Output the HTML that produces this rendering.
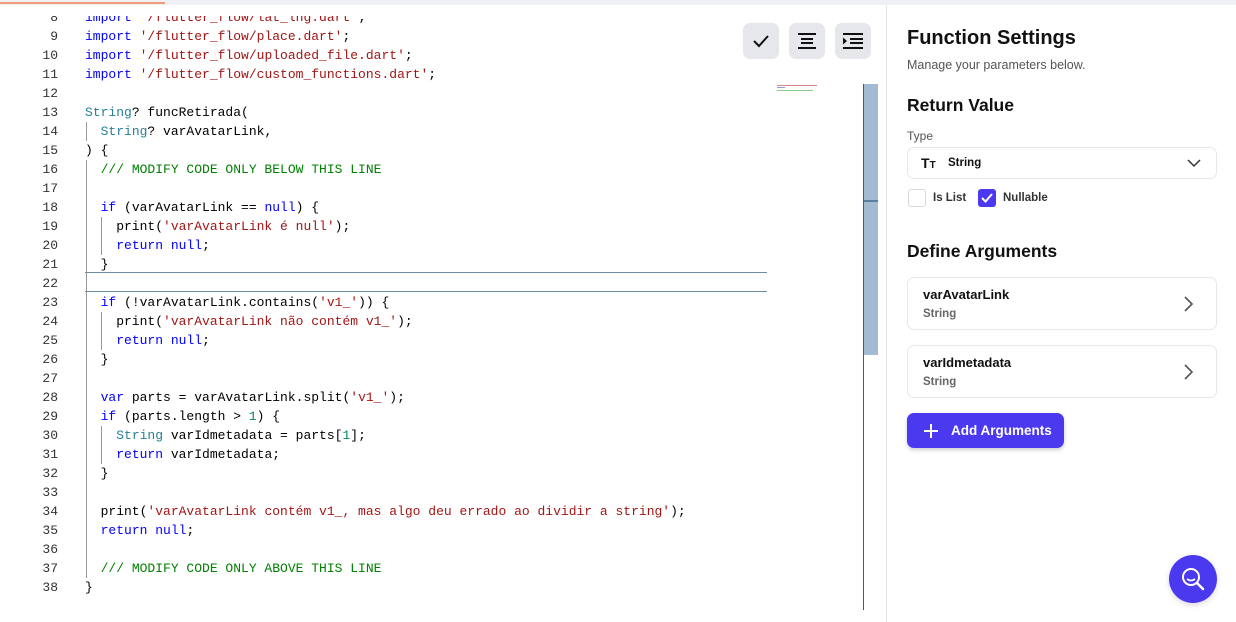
<!DOCTYPE html>
<html><head><meta charset="utf-8"><style>
*{margin:0;padding:0;box-sizing:border-box}
body{width:1236px;height:622px;overflow:hidden;background:#fff;position:relative;font-family:"Liberation Sans",sans-serif}
.top{position:absolute;left:0;top:0;width:1236px;height:5px;background:#eef0f3}
.top i{position:absolute;left:0;top:2px;width:165px;height:2px;background:#f29a7a}
.code{position:absolute;left:0;top:16px;width:864px;height:594px;overflow:hidden}
.l{position:absolute;left:0;height:19px;line-height:19px;font-family:"Liberation Mono",monospace;font-size:13px;white-space:pre;color:#000}
.n{position:absolute;width:58px;text-align:right;color:#333}
.t{position:absolute;left:85px}
.k{color:#0000ff}.s{color:#a31515}.c{color:#008000}.y{color:#267f99}.g{color:#098658}
.gd{position:absolute;width:1px;background:#999}
.btn{position:absolute;top:23px;width:36px;height:36px;border-radius:7px;background:#e5e7eb}
.panel{position:absolute;left:886px;top:5px;width:350px;height:617px;border-left:1px solid #e5e7eb}
h1{position:absolute;left:907px;top:27px;font-size:20px;font-weight:bold;color:#111}
h2{position:absolute;left:907px;font-size:17.5px;font-weight:bold;color:#111}
.sm{position:absolute;font-size:12.5px;color:#555}
.card{position:absolute;left:907px;width:310px;height:53px;border:1px solid #e5e7eb;border-radius:7px}
.card b{position:absolute;left:15px;top:9px;font-size:13px;color:#111}
.card span{position:absolute;left:15px;top:30px;font-size:11.5px;color:#666;font-weight:bold}
</style></head><body>
<div class="top"><i></i></div>
<div class="code">
<div class="l" style="top:-8.5px"><span class="n">8</span><span class="t"><span class="k">import</span> <span class="s">'/flutter_flow/lat_lng.dart'</span>;</span></div>
<div class="l" style="top:10.5px"><span class="n">9</span><span class="t"><span class="k">import</span> <span class="s">'/flutter_flow/place.dart'</span>;</span></div>
<div class="l" style="top:29.5px"><span class="n">10</span><span class="t"><span class="k">import</span> <span class="s">'/flutter_flow/uploaded_file.dart'</span>;</span></div>
<div class="l" style="top:48.5px"><span class="n">11</span><span class="t"><span class="k">import</span> <span class="s">'/flutter_flow/custom_functions.dart'</span>;</span></div>
<div class="l" style="top:67.5px"><span class="n">12</span></div>
<div class="l" style="top:86.5px"><span class="n">13</span><span class="t"><span class="y">String</span>? funcRetirada(</span></div>
<div class="l" style="top:105.5px"><span class="n">14</span><span class="t">  <span class="y">String</span>? varAvatarLink,</span></div>
<div class="l" style="top:124.5px"><span class="n">15</span><span class="t">) {</span></div>
<div class="l" style="top:143.5px"><span class="n">16</span><span class="t">  <span class="c">/// MODIFY CODE ONLY BELOW THIS LINE</span></span></div>
<div class="l" style="top:162.5px"><span class="n">17</span></div>
<div class="l" style="top:181.5px"><span class="n">18</span><span class="t">  <span class="k">if</span> (varAvatarLink == <span class="k">null</span>) {</span></div>
<div class="l" style="top:200.5px"><span class="n">19</span><span class="t">    print(<span class="s">'varAvatarLink é null'</span>);</span></div>
<div class="l" style="top:219.5px"><span class="n">20</span><span class="t">    <span class="k">return</span> <span class="k">null</span>;</span></div>
<div class="l" style="top:238.5px"><span class="n">21</span><span class="t">  }</span></div>
<div class="l" style="top:257.5px"><span class="n">22</span></div>
<div class="l" style="top:276.5px"><span class="n">23</span><span class="t">  <span class="k">if</span> (!varAvatarLink.contains(<span class="s">'v1_'</span>)) {</span></div>
<div class="l" style="top:295.5px"><span class="n">24</span><span class="t">    print(<span class="s">'varAvatarLink não contém v1_'</span>);</span></div>
<div class="l" style="top:314.5px"><span class="n">25</span><span class="t">    <span class="k">return</span> <span class="k">null</span>;</span></div>
<div class="l" style="top:333.5px"><span class="n">26</span><span class="t">  }</span></div>
<div class="l" style="top:352.5px"><span class="n">27</span></div>
<div class="l" style="top:371.5px"><span class="n">28</span><span class="t">  <span class="k">var</span> parts = varAvatarLink.split(<span class="s">'v1_'</span>);</span></div>
<div class="l" style="top:390.5px"><span class="n">29</span><span class="t">  <span class="k">if</span> (parts.length &gt; <span class="g">1</span>) {</span></div>
<div class="l" style="top:409.5px"><span class="n">30</span><span class="t">    <span class="y">String</span> varIdmetadata = parts[<span class="g">1</span>];</span></div>
<div class="l" style="top:428.5px"><span class="n">31</span><span class="t">    <span class="k">return</span> varIdmetadata;</span></div>
<div class="l" style="top:447.5px"><span class="n">32</span><span class="t">  }</span></div>
<div class="l" style="top:466.5px"><span class="n">33</span></div>
<div class="l" style="top:485.5px"><span class="n">34</span><span class="t">  print(<span class="s">'varAvatarLink contém v1_, mas algo deu errado ao dividir a string'</span>);</span></div>
<div class="l" style="top:504.5px"><span class="n">35</span><span class="t">  <span class="k">return</span> <span class="k">null</span>;</span></div>
<div class="l" style="top:523.5px"><span class="n">36</span></div>
<div class="l" style="top:542.5px"><span class="n">37</span><span class="t">  <span class="c">/// MODIFY CODE ONLY ABOVE THIS LINE</span></span></div>
<div class="l" style="top:561.5px"><span class="n">38</span><span class="t">}</span></div>
<div class="gd" style="left:86px;top:105.5px;height:19px"></div>
<div class="gd" style="left:86px;top:143.5px;height:418px"></div>
<div class="gd" style="left:101px;top:200.5px;height:38px"></div>
<div class="gd" style="left:101px;top:295.5px;height:38px"></div>
<div class="gd" style="left:101px;top:409.5px;height:38px"></div>
</div>
<div style="position:absolute;left:85px;top:272px;width:682px;height:1px;background:#6e8ba0"></div>
<div style="position:absolute;left:85px;top:291px;width:682px;height:1px;background:#6e8ba0"></div>
<div style="position:absolute;left:777px;top:85px;width:40px;height:1px;background:#d88"></div>
<div style="position:absolute;left:777px;top:87px;width:8px;height:1px;background:#99d"></div>
<div style="position:absolute;left:777px;top:90px;width:36px;height:1px;background:#8c8"></div>
<div style="position:absolute;left:864px;top:84px;width:14px;height:271px;background:#a3bad3"></div>
<div style="position:absolute;left:864px;top:200px;width:14px;height:2px;background:#5a7ea0"></div>
<div style="position:absolute;left:863px;top:84px;width:1px;height:526px;background:#555"></div>
<div class="btn" style="left:743px"><svg width="36" height="36"><path d="M11 18l5 5 9-10" fill="none" stroke="#111" stroke-width="2"/></svg></div>
<div class="btn" style="left:789px"><svg width="36" height="36"><path d="M9 11h18M12 16h12M12 20h12M9 25h18" stroke="#111" stroke-width="2"/></svg></div>
<div class="btn" style="left:835px"><svg width="36" height="36"><path d="M8 11h20M15 16h13M15 20h13M8 25h20" stroke="#111" stroke-width="2"/><path d="M8 14.5l4 3.5-4 3.5z" fill="#111"/></svg></div>
<div class="panel"></div>
<h1>Function Settings</h1>
<div class="sm" style="left:907px;top:58px">Manage your parameters below.</div>
<h2 style="top:95px">Return Value</h2>
<div class="sm" style="left:907px;top:129px;font-size:12px">Type</div>
<div style="position:absolute;left:907px;top:147px;width:310px;height:32px;border:1px solid #e5e7eb;border-radius:7px">
<span style="position:absolute;left:13px;top:7px;font-weight:bold;font-size:14px;color:#111">T<small style="font-size:10px">T</small></span>
<span style="position:absolute;left:40px;top:9px;font-weight:bold;font-size:11.5px;color:#111">String</span>
<svg style="position:absolute;left:278px;top:9px" width="16" height="12"><path d="M2 3l6 6 6-6" fill="none" stroke="#333" stroke-width="1.5"/></svg></div>
<div style="position:absolute;left:908px;top:189px;width:18px;height:18px;border:1.5px solid #d8dadf;border-radius:3px"></div>
<div style="position:absolute;left:933px;top:192px;font-size:11.5px;font-weight:bold;color:#333">Is List</div>
<div style="position:absolute;left:978px;top:189px;width:18px;height:18px;background:#4b39ef;border-radius:3px"><svg width="18" height="18"><path d="M4 9l3.5 3.5L14 5" fill="none" stroke="#fff" stroke-width="2"/></svg></div>
<div style="position:absolute;left:1003px;top:192px;font-size:11.5px;font-weight:bold;color:#333">Nullable</div>
<h2 style="top:241px">Define Arguments</h2>
<div class="card" style="top:277px"><b>varAvatarLink</b><span>String</span><svg style="position:absolute;left:274px;top:17px" width="12" height="18"><path d="M3 2l7 7-7 7" fill="none" stroke="#555" stroke-width="1.6"/></svg></div>
<div class="card" style="top:345px"><b>varIdmetadata</b><span>String</span><svg style="position:absolute;left:274px;top:17px" width="12" height="18"><path d="M3 2l7 7-7 7" fill="none" stroke="#555" stroke-width="1.6"/></svg></div>
<div style="position:absolute;left:907px;top:413px;width:157px;height:35px;background:#4b39ef;border-radius:7px;box-shadow:0 2px 4px rgba(0,0,0,.2)">
<svg style="position:absolute;left:15px;top:9px" width="18" height="18"><path d="M9 2v14M2 9h14" stroke="#fff" stroke-width="2"/></svg>
<span style="position:absolute;left:44px;top:10px;color:#fff;font-weight:bold;font-size:13.5px">Add Arguments</span></div>
<div style="position:absolute;left:1169px;top:555px;width:48px;height:48px;border-radius:50%;background:#4b39ef;box-shadow:0 2px 6px rgba(0,0,0,.15)">
<svg width="48" height="48"><circle cx="22" cy="22" r="8" fill="none" stroke="#fff" stroke-width="2"/><path d="M28 28l6 6" stroke="#fff" stroke-width="2.5" stroke-linecap="round"/><path d="M18 24q4 3 8 0" fill="none" stroke="#fff" stroke-width="1.8"/></svg></div>
</body></html>
